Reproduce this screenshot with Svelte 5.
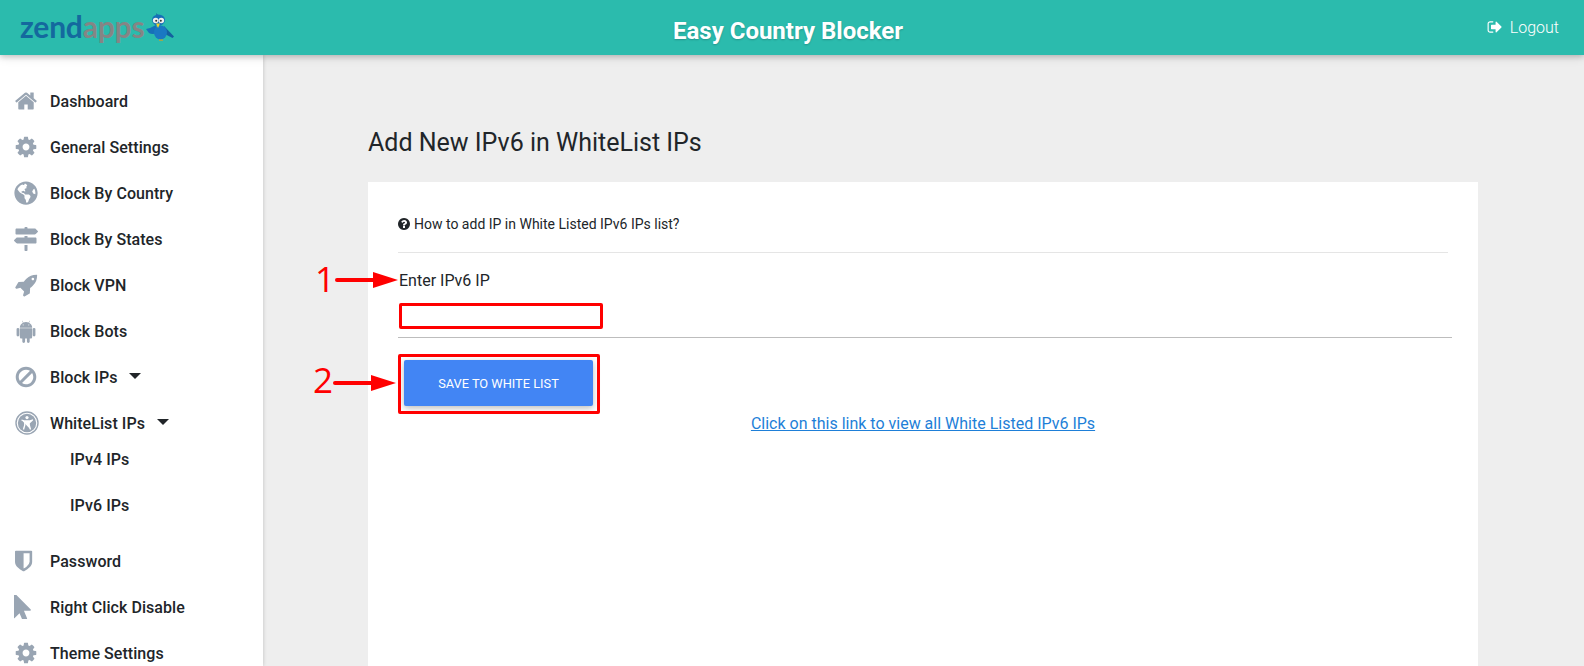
<script lang="ts">
  const cog = "M1152 896q0-106-75-181t-181-75-181 75-75 181 75 181 181 75 181-75 75-181zm512-109v222q0 12-8 23t-20 13l-185 28q-19 54-39 91 35 50 107 138 10 12 10 25t-9 23q-27 37-99 108t-94 71q-12 0-26-9l-138-108q-44 23-91 38-16 136-29 186-7 28-36 28h-222q-14 0-24.5-8.5t-11.5-21.5l-28-184q-49-16-90-37l-141 107q-10 9-25 9-14 0-25-11-126-114-165-168-7-10-7-23 0-12 8-23 15-21 51-66.5t54-70.5q-27-50-41-99l-183-27q-13-2-21-12.5t-8-23.5v-222q0-12 8-23t19-13l186-28q14-46 39-92-40-57-107-138-10-12-10-24 0-10 9-23 26-36 98.5-107.5t94.5-71.5q13 0 26 10l138 107q44-23 91-38 16-136 29-186 7-28 36-28h222q14 0 24.5 8.5t11.5 21.5l28 184q49 16 90 37l142-107q9-9 24-9 13 0 25 10 129 119 165 170 7 8 7 22 0 12-8 23-15 21-51 66.5t-54 70.5q26 50 41 98l183 28q13 2 21 12.5t8 23.5z";
  const fa = "0 0 1792 1792";

  const icons: Record<string, { box: string; d: string }> = {
    home: { box: fa, d: "M1472 992v480q0 26-19 45t-45 19h-384v-384h-256v384h-384q-26 0-45-19t-19-45v-480q0-1 .5-3t.5-3l575-474 575 474q1 2 1 6zm223-69l-62 74q-8 9-21 11h-3q-13 0-21-7l-692-577-692 577q-12 8-24 7-13-2-21-11l-62-74q-8-10-7-23.5t11-21.5l719-599q32-26 76-26t76 26l244 204v-195q0-14 9-23t23-9h192q14 0 23 9t9 23v408l219 182q10 8 11 21.5t-7 23.5z" },
    cog: { box: fa, d: cog },
    globe: { box: "0 0 496 512", d: "M248 8C111.03 8 0 119.03 0 256s111.03 248 248 248 248-111.03 248-248S384.97 8 248 8zm82.29 357.6c-3.9 3.88-7.99 7.95-11.31 11.28-2.99 3-5.1 6.7-6.17 10.71-1.51 5.66-2.73 11.38-4.77 16.87l-17.39 46.85c-13.76 3-28 4.69-42.65 4.69v-27.38c1.69-12.62-7.64-36.26-22.63-51.25-6-6-9.37-14.14-9.37-22.63v-32.01c0-11.64-6.27-22.34-16.46-27.97-14.37-7.95-34.81-19.06-48.81-26.11-11.48-5.78-22.1-13.14-31.65-21.75l-.8-.72a114.792 114.792 0 0 1-18.06-20.74c-9.38-13.77-24.66-36.42-34.59-51.14 20.47-45.5 57.36-82.04 103.2-101.89l24.01 12.01C203.48 89.74 216 82.01 216 70.11v-11.3c7.99-1.29 16.12-2.11 24.39-2.42l28.3 28.3c6.25 6.25 6.25 16.38 0 22.63L264 112l-10.34 10.34c-3.12 3.12-3.12 8.19 0 11.31l4.69 4.69c3.12 3.12 3.12 8.19 0 11.31l-8 8a8.008 8.008 0 0 1-5.66 2.34h-8.99c-2.08 0-4.08.81-5.58 2.27l-9.92 9.65a8.008 8.008 0 0 0-1.58 9.31l15.59 31.19c2.66 5.32-1.21 11.58-7.15 11.58h-5.64c-1.93 0-3.79-.7-5.24-1.96l-9.28-8.06a16.017 16.017 0 0 0-15.55-3.1l-31.17 10.39a11.95 11.95 0 0 0-8.17 11.34c0 4.53 2.56 8.66 6.61 10.69l11.08 5.54c9.41 4.71 19.79 7.16 30.31 7.16s22.59 27.29 32 32h66.75c8.49 0 16.62 3.37 22.63 9.37l13.69 13.69a30.503 30.503 0 0 1 8.93 21.57 46.536 46.536 0 0 1-13.72 32.98zM417 274.25c-5.79-1.45-10.84-5-14.15-9.97l-17.98-26.97a23.97 23.97 0 0 1 0-26.62l19.59-29.38c2.32-3.47 5.5-6.29 9.24-8.15l12.98-6.49C440.2 193.59 448 223.87 448 256c0 8.67-.74 17.16-1.82 25.54L417 274.25z" },
    signs: { box: "0 0 512 512", d: "M507.31 84.69L464 41.37c-6-6-14.14-9.37-22.63-9.37H288V16c0-8.84-7.16-16-16-16h-32c-8.84 0-16 7.16-16 16v16H56c-13.25 0-24 10.75-24 24v80c0 13.25 10.75 24 24 24h385.37c8.49 0 16.62-3.37 22.63-9.37l43.31-43.31c6.25-6.26 6.25-16.38 0-22.63zM224 496c0 8.84 7.16 16 16 16h32c8.84 0 16-7.16 16-16V384h-64v112zm232-272H288v-32h-64v32H70.63c-8.49 0-16.62 3.37-22.63 9.37L4.69 276.69c-6.25 6.25-6.25 16.38 0 22.63L48 342.63c6 6 14.14 9.37 22.63 9.37H456c13.25 0 24-10.75 24-24v-80c0-13.25-10.75-24-24-24z" },
    rocket: { box: fa, d: "M1504 448q0-40-28-68t-68-28-68 28-28 68 28 68 68 28 68-28 28-68zm224-288q0 249-75.5 430.5t-253.5 360.5q-81 80-195 176l-20 379q-2 16-16 26l-384 224q-7 4-16 4-12 0-23-9l-64-64q-13-14-8-32l85-276-281-281-276 85q-3 1-9 1-14 0-23-9l-64-64q-17-19-5-39l224-384q10-14 26-16l379-20q96-114 176-195 188-187 358-258t431-71q14 0 24 9.5t10 22.5z" },
    android: { box: "0 0 1408 1792", d: "M493 483q16 0 27.5-11.5t11.5-27.5-11.5-27.5-27.5-11.5-27 11.5-11 27.5 11 27.5 27 11.5zm422 0q16 0 27-11.5t11-27.5-11-27.5-27-11.5-27.5 11.5-11.5 27.5 11.5 27.5 27.5 11.5zm-812 184q42 0 72 30t30 72v430q0 43-29.5 73t-72.5 30-73-30-30-73v-430q0-42 30-72t73-30zm1060 19v666q0 46-32 78t-77 32h-75v227q0 43-30 73t-73 30-73-30-30-73v-227h-138v227q0 43-30 73t-73 30q-42 0-72-30t-30-73l-1-227h-74q-46 0-78-32t-32-78v-666h918zm-232-405q107 55 171 153.5t64 215.5h-925q0-117 64-215.5t172-153.5l-71-131q-7-13 5-20 13-6 20 6l72 132q95-42 201-42t201 42l72-132q7-12 20-6 12 7 5 20zm477 488v430q0 43-30 73t-73 30q-42 0-72-30t-30-73v-430q0-43 30-72.5t72-29.5q43 0 73 29.5t30 72.5z" },
    ban: { box: fa, d: "M1440 893q0-161-87-295l-754 753q137 89 297 89 111 0 211.5-43.5t173.5-116.5 116-174.5 43-212.5zm-999 299l755-754q-135-91-300-91-148 0-273 73t-198 199-73 274q0 162 89 299zm1223-299q0 157-61 300t-163.5 246-245 164-298.5 61-298.5-61-245-164-163.5-246-61-300 61-299.5 163.5-245.5 245-164 298.5-61 298.5 61 245 164 163.5 245.5 61 299.5z" },
    shield: { box: "180 0 1792 1792", d: "M1344 960v-640h-448v1137q119-63 213-137 235-184 235-360zm192-768v768q0 86-33.5 170.5t-83 150-118 127.5-126.5 103-121 77.5-89.5 49.5-42.5 20q-12 6-26 6t-26-6q-16-7-42.5-20t-89.5-49.5-121-77.5-126.5-103-118-127.5-83-150-33.5-170.5v-768q0-26 19-45t45-19h1152q26 0 45 19t19 45z" },
    pointer: { box: "320 128 1552 1552", d: "M1389 1043q31 30 14 69-17 40-59 40h-382l201 476q10 25 0 49t-34 35l-177 75q-25 10-49 0t-35-34l-191-452-312 312q-19 19-45 19-12 0-24-5-40-17-40-59v-1504q0-42 40-59 12-5 24-5 27 0 45 19z" },
  };

  const topItems = [
    { label: "Dashboard", icon: "home" },
    { label: "General Settings", icon: "cog" },
    { label: "Block By Country", icon: "globe" },
    { label: "Block By States", icon: "signs" },
    { label: "Block VPN", icon: "rocket" },
    { label: "Block Bots", icon: "android" },
    { label: "Block IPs", icon: "ban", caret: true },
  ];
  const bottomItems = [
    { label: "Password", icon: "shield" },
    { label: "Right Click Disable", icon: "pointer" },
    { label: "Theme Settings", icon: "cog" },
  ];
</script>

{#snippet item(it)}
  <li class="item">
    <svg class="icon" viewBox={icons[it.icon].box}><path d={icons[it.icon].d} /></svg>
    <span>{it.label}</span>
    {#if it.caret}<i class="caret"></i>{/if}
  </li>
{/snippet}

<div class="page">
  <header class="topbar">
    <div class="logo">
      <span class="zend">zend</span><span class="apps">apps</span>
      <svg class="bird" viewBox="0 0 28 28">
        <path d="M0 16 Q5 15 10 12 L12 20 Q6 22 3 20Z" fill="#1670b8" />
        <path d="M18 13 L28 23.5 L26.5 25 L17 20Z" fill="#14609f" />
        <ellipse cx="14.5" cy="19.5" rx="6.5" ry="7" fill="#1a78c2" />
        <path d="M10 0 L13 3 L11 4Z" fill="#14609f" />
        <ellipse cx="12.5" cy="7" rx="6.5" ry="5.5" fill="#1670b8" />
        <circle cx="9.7" cy="7.5" r="2.8" fill="#eee" />
        <circle cx="15.3" cy="7.5" r="2.8" fill="#eee" />
        <circle cx="10.2" cy="7.8" r="1" fill="#333" />
        <circle cx="14.8" cy="7.8" r="1" fill="#333" />
        <path d="M10 10.5 L14 10.5 L12 15Z" fill="#f2d22e" />
        <path d="M13 26.5 h4 v1.2 h-4z" fill="#c9a227" />
      </svg>
    </div>
    <h1 class="title">Easy Country Blocker</h1>
    <a class="logout" href="#logout">
      <svg class="logout-icon" viewBox={fa}><path d="M704 1440q0 4 1 20t.5 26.5-3 23.5-10 19.5-20.5 6.5h-320q-119 0-203.5-84.5t-84.5-203.5v-704q0-119 84.5-203.5t203.5-84.5h320q13 0 22.5 9.5t9.5 22.5q0 4 1 20t.5 26.5-3 23.5-10 19.5-20.5 6.5h-320q-66 0-113 47t-47 113v704q0 66 47 113t113 47h312l11.5 1 11.5 3 8 5.5 7 9 2 13.5zm928-544q0 26-19 45l-544 544q-19 19-45 19t-45-19-19-45v-288h-448q-26 0-45-19t-19-45v-384q0-26 19-45t45-19h448v-288q0-26 19-45t45-19 45 19l544 544q19 19 19 45z" /></svg>
      Logout
    </a>
  </header>

  <div class="body">
    <nav class="sidebar">
      <ul>
        {#each topItems as it}
          {@render item(it)}
        {/each}
        <li class="item parent">
          <svg class="icon access" viewBox="0 0 24 24">
            <circle cx="12" cy="12" r="11" fill="none" stroke="#99a5b3" stroke-width="1.4" />
            <circle cx="12" cy="12" r="9.2" fill="#99a5b3" />
            <circle cx="12" cy="6.6" r="1.6" fill="#fff" />
            <path d="M6.5 9 L10 10 H14 L17.5 9 L14.2 12 V14 L15.5 18.5 M9.8 10 V14 L8.5 18.5" fill="#fff" stroke="#fff" stroke-width="1.3" stroke-linejoin="round" />
          </svg>
          <span>WhiteList IPs</span>
          <i class="caret"></i>
        </li>
        <li class="item sub">IPv4 IPs</li>
        <li class="item sub last">IPv6 IPs</li>
        {#each bottomItems as it}
          {@render item(it)}
        {/each}
      </ul>
    </nav>

    <main class="content">
      <h2 class="heading">Add New IPv6 in WhiteList IPs</h2>
      <section class="card">
        <p class="help">
          <svg class="help-icon" viewBox={fa}><path d="M1024 1376v-192q0-14-9-23t-23-9h-192q-14 0-23 9t-9 23v192q0 14 9 23t23 9h192q14 0 23-9t9-23zm256-672q0-88-55.5-163t-138.5-116-170-41q-243 0-371 213-15 24 8 42l132 100q7 6 19 6 16 0 25-12 53-68 86-92 34-24 86-24 48 0 85.5 26t37.5 59q0 38-20 61t-68 45q-63 28-115.5 86.5t-52.5 125.5v36q0 14 9 23t23 9h192q14 0 23-9t9-23q0-19 21.5-49.5t54.5-49.5q32-18 49-28.5t46-35 44.5-48 28-60.5 12.5-81zm384 192q0 209-103 385.5t-279.5 279.5-385.5 103-385.5-103-279.5-279.5-103-385.5 103-385.5 279.5-279.5 385.5-103 385.5 103 279.5 279.5 103 385.5z" /></svg>
          How to add IP in White Listed IPv6 IPs list?
        </p>
        <hr class="divider" />
        <div class="form">
          <label class="field-label" for="ip">Enter IPv6 IP</label>
          <input id="ip" class="field" type="text" />
          <button class="save" type="button">Save to White List</button>

          <!-- red callouts drawn on top of the screenshot -->
          <span class="num num1">1</span>
          <svg class="arrow arrow1" viewBox="0 0 64 20"><path d="M2 10 H40" stroke="#f00" stroke-width="4" stroke-linecap="round" /><path d="M38 2 L63 10 L38 18Z" fill="#f00" /></svg>
          <span class="mark mark-input"></span>
          <span class="num num2">2</span>
          <svg class="arrow arrow2" viewBox="0 0 64 20"><path d="M2 10 H40" stroke="#f00" stroke-width="4" stroke-linecap="round" /><path d="M38 2 L63 10 L38 18Z" fill="#f00" /></svg>
          <span class="mark mark-button"></span>
        </div>
        <p class="view-all"><a href="#list">Click on this link to view all White Listed IPv6 IPs</a></p>
      </section>
    </main>
  </div>
</div>

<style>
  :global(body) {
    margin: 0;
    font-family: Roboto, "Liberation Sans", sans-serif;
    color: #212529;
    overflow: hidden;
  }

  .page {
    height: 100vh;
    display: flex;
    flex-direction: column;
    overflow: hidden;
    background: #eee;
  }

  .topbar {
    height: 55px;
    flex: none;
    display: grid;
    grid-template-columns: 1fr auto 1fr;
    align-items: center;
    background: #2bbbad;
    box-shadow: 0 2px 5px 0 rgba(0, 0, 0, 0.16), 0 2px 10px 0 rgba(0, 0, 0, 0.12);
    position: relative;
    z-index: 2;
  }

  .logo {
    display: flex;
    align-items: center;
    padding-left: 20px;
    font-family: Lato, "Open Sans", sans-serif;
    font-size: 30px;
    line-height: 1;
    letter-spacing: -0.2px;
    margin-top: -3px;
  }

  .zend {
    color: #14699e;
    font-weight: 700;
  }

  .apps {
    color: #858585;
    font-weight: 700;
  }

  .bird {
    width: 28px;
    height: 28px;
    margin-left: 2px;
    margin-top: 2px;
  }

  .title {
    margin: 7px 8px 0 0;
    color: #fff;
    font-size: 24px;
    font-weight: 700;
    text-shadow: 0 1px 2px rgba(0, 0, 0, 0.2);
  }

  .logout {
    justify-self: end;
    display: flex;
    align-items: center;
    gap: 7px;
    margin: -1px 25px 0 0;
    color: #fff;
    font-size: 16px;
    font-weight: 300;
    text-decoration: none;
  }

  .logout-icon {
    width: 16px;
    height: 16px;
    fill: #fff;
  }

  .body {
    flex: 1;
    display: flex;
    min-height: 0;
  }

  .sidebar {
    width: 263px;
    flex: none;
    background: #fff;
    box-shadow: 0 0 4px rgba(0, 0, 0, 0.2);
    padding-top: 23px;
  }

  ul {
    list-style: none;
    margin: 0;
    padding: 0;
  }

  .item {
    height: 46px;
    display: flex;
    align-items: center;
    padding-left: 14px;
    font-size: 16px;
    font-weight: 500;
    letter-spacing: 0.06px;
    color: #212529;
  }

  .item.parent {
    margin-bottom: -10px;
  }

  .item.sub {
    padding-left: 70px;
  }

  .item.last {
    margin-bottom: 10px;
  }

  .icon {
    width: 24px;
    height: 24px;
    flex: none;
    margin-right: 12px;
    fill: #99a5b3;
  }

  .icon.access {
    margin-left: 1px;
    margin-right: 11px;
  }

  .caret {
    width: 0;
    height: 0;
    margin-left: 12px;
    margin-top: -3px;
    border-left: 6px solid transparent;
    border-right: 6px solid transparent;
    border-top: 6px solid #212529;
  }

  .content {
    flex: 1;
    min-width: 0;
    padding: 0 106px 0 105px;
  }

  .heading {
    margin: 73px 0 24px;
    font-size: 25px;
    line-height: 30px;
    font-weight: 400;
  }

  .card {
    background: #fff;
    padding: 30px;
    height: 600px;
  }

  .help {
    margin: 0;
    display: flex;
    align-items: center;
    gap: 3px;
    font-size: 14px;
    line-height: 24px;
  }

  .help-icon {
    width: 14px;
    height: 14px;
    margin-left: -1px;
    fill: #212529;
  }

  .divider {
    margin: 16px 0 0;
    border: 0;
    border-top: 1px solid #e5e5e5;
  }

  .form {
    position: relative;
    padding-top: 17px;
  }

  .field-label {
    display: block;
    margin-left: 1px;
    font-size: 16px;
    line-height: 22px;
  }

  .field {
    display: block;
    box-sizing: border-box;
    width: calc(100% + 4px);
    height: 37px;
    margin-top: 9px;
    padding: 0;
    border: 0;
    border-bottom: 1px solid #bdbdbd;
    outline: 0;
    background: transparent;
  }

  .save {
    display: block;
    width: 189px;
    height: 46px;
    margin: 22px 0 0 6px;
    border: 0;
    border-radius: 2px;
    background: #4285f4;
    color: #fff;
    font-family: inherit;
    font-size: 12.8px;
    font-weight: 400;
    text-transform: uppercase;
    box-shadow: 0 2px 5px 0 rgba(0, 0, 0, 0.16), 0 2px 10px 0 rgba(0, 0, 0, 0.12);
  }

  .view-all {
    margin: 8px 0 0;
    text-align: center;
    font-size: 16px;
    line-height: 20px;
  }

  .view-all a {
    color: #1e7fd8;
    text-decoration: underline;
  }

  .num {
    position: absolute;
    color: #f00;
    font-family: "Open Sans", sans-serif;
    font-size: 35px;
    line-height: 36px;
  }

  .num1 {
    left: -83px;
    top: 8px;
  }

  .num2 {
    left: -85px;
    top: 109px;
  }

  .arrow {
    position: absolute;
    width: 64px;
    height: 20px;
  }

  .arrow1 {
    left: -63px;
    top: 17px;
  }

  .arrow2 {
    left: -65px;
    top: 120px;
  }

  .mark {
    position: absolute;
    box-sizing: border-box;
    border: 3px solid #f00;
    border-radius: 2px;
    pointer-events: none;
  }

  .mark-input {
    left: 1px;
    top: 50px;
    width: 204px;
    height: 26px;
  }

  .mark-button {
    left: 0;
    top: 101px;
    width: 202px;
    height: 60px;
  }
</style>
